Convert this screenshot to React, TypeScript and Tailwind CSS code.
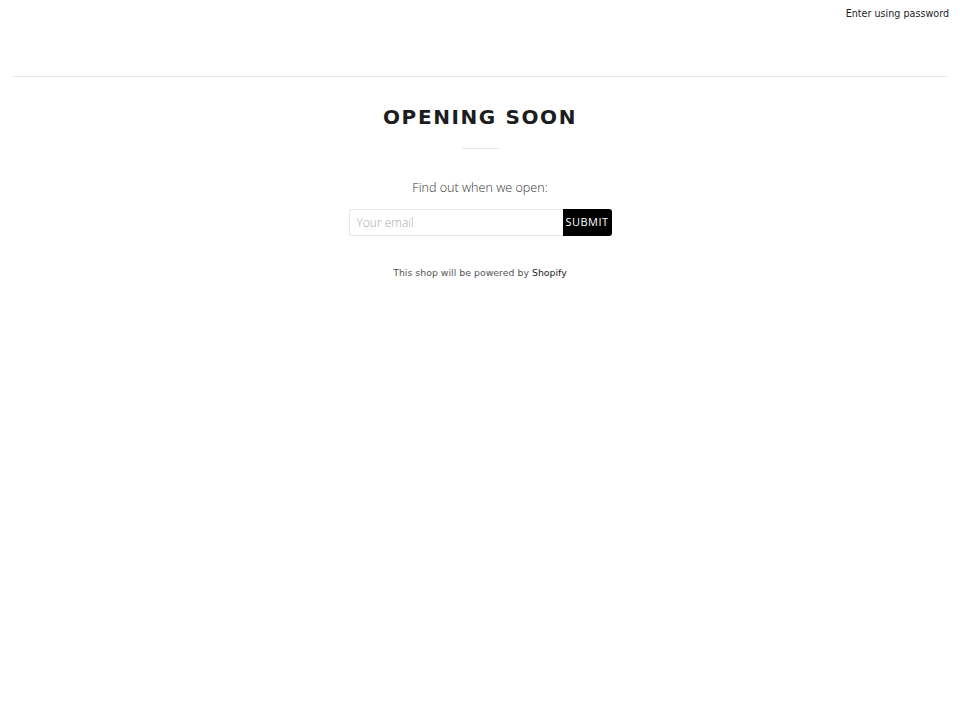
export default function App() {
    return (
        <div className="min-h-screen w-full bg-white text-[#1c1d1d]" style={{ fontFamily: '"DejaVu Sans", sans-serif' }}>
            {/* Header */}
            <div className="px-3">
                <div className="flex h-[77px] items-start justify-end border-b border-[#e8e8e8] pt-[7px]">
                    <a className="-mr-px text-[9.6px] leading-[14px] text-[#1c1d1d]">Enter using password</a>
                </div>
            </div>

            {/* Main */}
            <div className="flex flex-col items-center pt-[26px]">
                <h1 className="text-[20px] font-bold leading-[28px] tracking-[1.6px] text-[#1c1d1d]">OPENING SOON</h1>
                <div className="mt-[17px] h-px w-[37px] bg-[#e8e8e8]" />
                <p
                    className="mt-[30px] text-[12.6px] font-light leading-[18px] text-[#333]"
                    style={{ fontFamily: '"Open Sans", sans-serif' }}
                >
                    Find out when we open:
                </p>
                <form className="mt-[12px] flex h-[27px]" onSubmit={(e) => e.preventDefault()}>
                    <input
                        placeholder="Your email"
                        className="h-full w-[214px] rounded-l-[3px] border border-r-0 border-[#e8e8e8] px-[7px] text-[12px] font-light text-[#555] outline-none placeholder:text-[#aaa]"
                        style={{ fontFamily: '"Open Sans", sans-serif' }}
                    />
                    <button
                        className="h-full w-[49px] rounded-r-[3px] bg-black text-[11px] tracking-[0.5px] text-white"
                        style={{ fontFamily: '"Open Sans", sans-serif' }}
                    >
                        SUBMIT
                    </button>
                </form>
                <p className="mt-[30px] text-[9.4px] leading-[14px] text-[#555]">
                    This shop will be powered by <span className="text-[#1c1d1d]">Shopify</span>
                </p>
            </div>
        </div>
    );
}
